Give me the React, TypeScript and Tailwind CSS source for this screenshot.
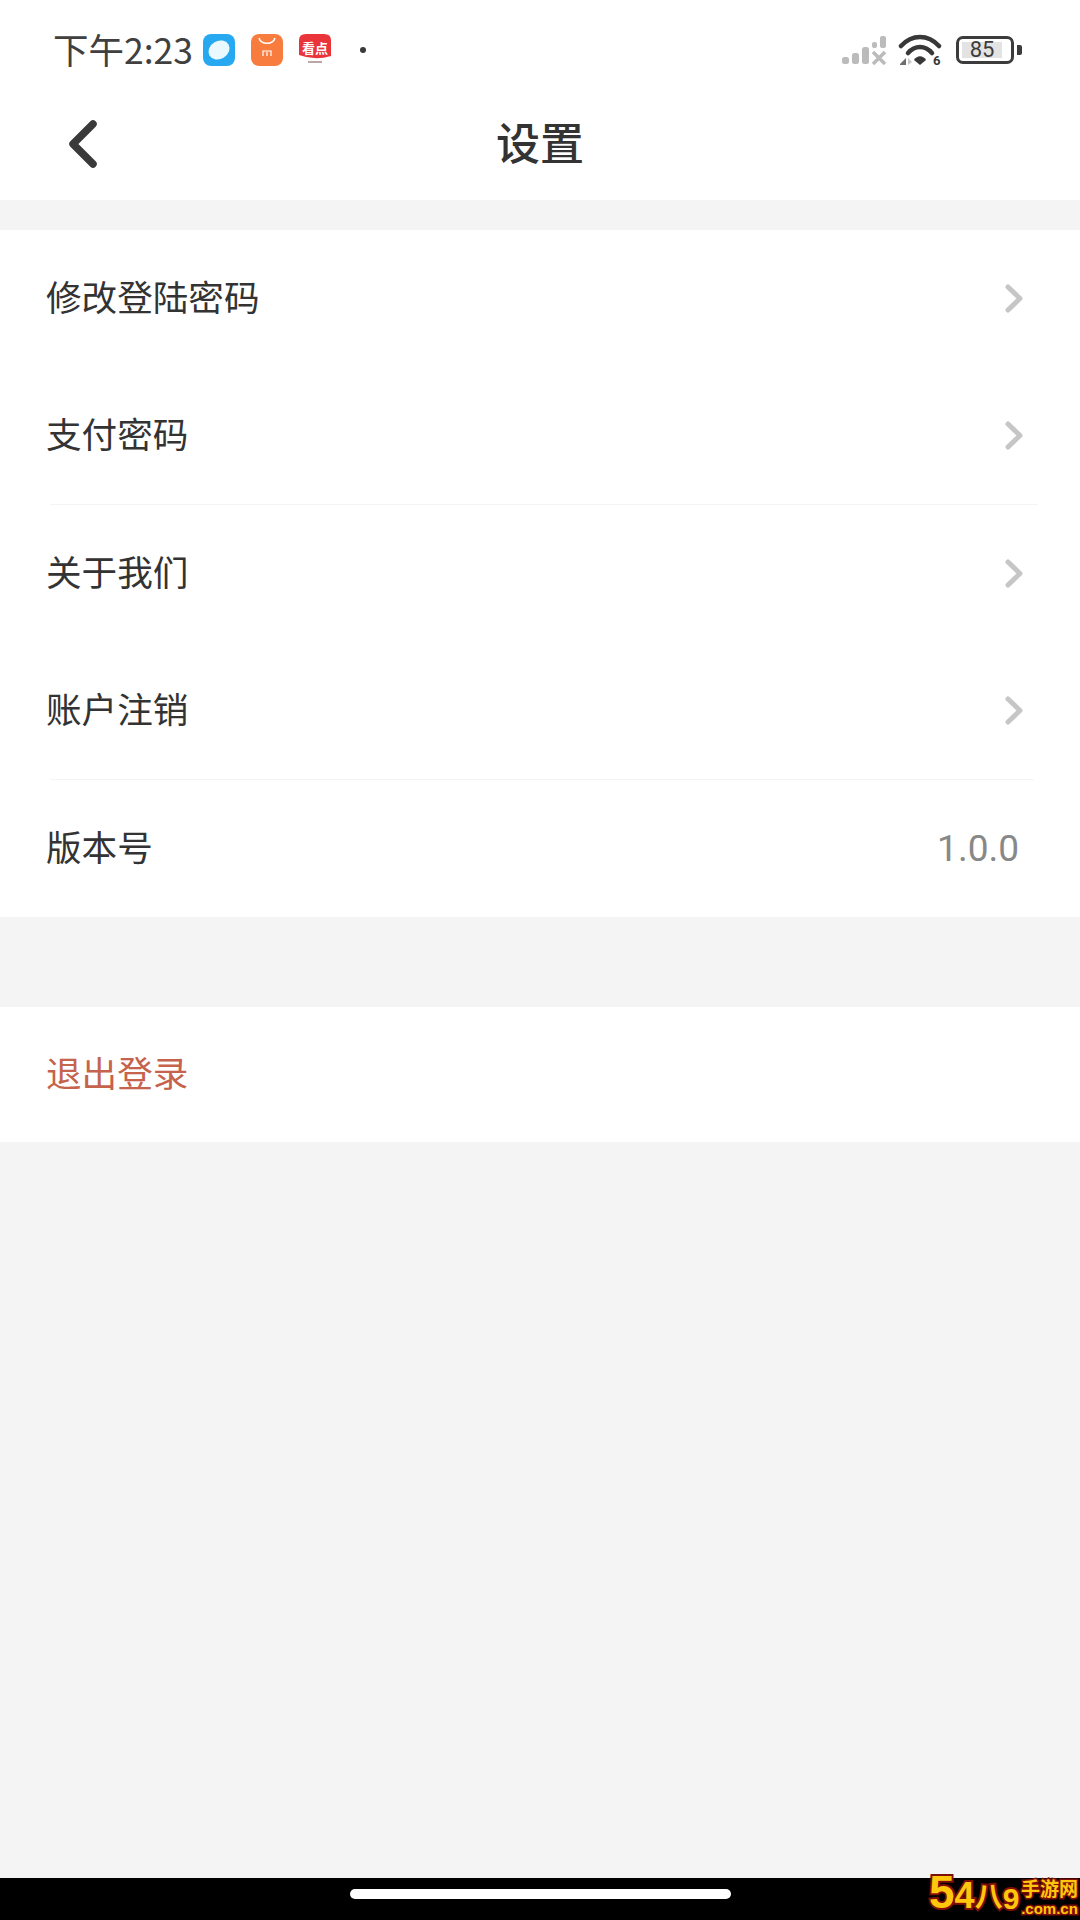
const cjk = "font-['Noto_Sans_CJK_SC','Noto_Sans',sans-serif]";

function Chevron() {
  return (
    <svg width="20" height="32" viewBox="0 0 20 32" fill="none" className="shrink-0">
      <path d="M4 4 L16 15.5 L4 27" stroke="#c6c6c6" strokeWidth="5" strokeLinecap="round" strokeLinejoin="round" />
    </svg>
  );
}

function Row({ label, value, chevron = true }: { label: string; value?: string; chevron?: boolean }) {
  return (
    <div className="flex h-[137px] items-center justify-between pl-[46px] pr-[56px]">
      <span className="pb-[6px] text-[35.6px] text-[#333333]">{label}</span>
      {value && <span className="mr-[5px] font-['Roboto',sans-serif] text-[37px] text-[#888888]">{value}</span>}
      {chevron && <Chevron />}
    </div>
  );
}

function Divider({ right }: { right: number }) {
  return (
    <div className="pl-[50px]" style={{ paddingRight: right }}>
      <div className="h-px bg-[#f4f4f4]" />
    </div>
  );
}

function StatusIcons() {
  return (
    <div className="flex items-center">
      {/* signal */}
      <svg width="46" height="32" viewBox="0 0 46 32" className="mr-[10px]">
        <g fill="#bbbbbb">
          <rect x="0" y="23" width="7" height="7" rx="2.5" />
          <rect x="10" y="19" width="7" height="11" rx="2.5" />
          <rect x="20" y="13" width="7" height="17" rx="2.5" />
          <rect x="30" y="8" width="5" height="6" rx="2" />
          <rect x="38" y="2" width="6" height="12" rx="2" />
        </g>
        <path d="M31 18 L43 30 M43 18 L31 30" stroke="#bbbbbb" strokeWidth="3.5" />
      </svg>
      {/* wifi */}
      <svg width="46" height="34" viewBox="0 0 46 34" className="mr-[12px]">
        <g fill="none" stroke="#383838" strokeWidth="4.5" strokeLinecap="round">
          <path d="M3 13 C14 1 30 1 41 13" />
          <path d="M10 20 C17 12 27 12 34 20" />
        </g>
        <path d="M16 27 C19 22 25 22 28 27 L22 32 Z" fill="#383838" />
        <path d="M2 31 L8 25 V32 H2 Z" fill="#6e6e6e" />
        <path d="M10 25 L14 29 L10 32 Z" fill="#c8c8c8" />
        <text x="35" y="32" fontSize="13" fontWeight="700" fill="#383838" fontFamily="Roboto, sans-serif">6</text>
      </svg>
      {/* battery */}
      <div className="flex h-[28px] w-[58px] items-center rounded-[7px] border-[3px] border-[#3c3c3c] pl-[3px]">
        <div className="flex h-[16px] w-[40px] items-center justify-center bg-[#e3e3e3] font-['Roboto',sans-serif] text-[22px] leading-none text-[#3c3c3c]">
          85
        </div>
      </div>
      <div className="ml-[3px] h-[10px] w-[5px] rounded-r-[2px] bg-[#3c3c3c]" />
    </div>
  );
}

function Watermark() {
  return (
    <div className="absolute bottom-0 right-[1px] flex h-[54px] w-[150px] items-end whitespace-nowrap font-['Liberation_Sans',sans-serif] font-bold text-[#ffc60b] [-webkit-text-stroke:4px_#7d0f08] [paint-order:stroke]">
      <div className="flex w-[91px] items-end pb-[6px] leading-none">
        <span className="text-[46px] leading-[44px] [paint-order:stroke]">5</span>
        <span className="text-[36px] leading-[36px] [paint-order:stroke]">4</span>
        <span className={`${cjk} text-[28px] leading-[38px] [paint-order:stroke]`}>八</span>
        <span className="text-[30px] leading-[30px] [paint-order:stroke]">9</span>
      </div>
      <div className="flex flex-1 flex-col items-center pb-[3px]">
        <span className={`${cjk} text-[19px] leading-[26px] [-webkit-text-stroke:3px_#7d0f08] [paint-order:stroke]`}>手游网</span>
        <span className="text-[15px] leading-[16px] [-webkit-text-stroke:3px_#7d0f08] [paint-order:stroke]">.com.cn</span>
      </div>
    </div>
  );
}

export default function App() {
  return (
    <div className={`relative flex h-[1920px] w-[1080px] flex-col overflow-hidden bg-[#f4f4f4] ${cjk}`}>
      <div className="bg-white">
        {/* status bar */}
        <div className="flex h-[92px] items-center pl-[53px] pr-[58px] pt-[8px]">
          <span className="w-[141px] whitespace-nowrap pb-[2px] text-[35.5px] text-[#404040]">下午2:23</span>
          <div className="ml-[9px] flex items-center gap-[16px]">
            <svg width="32" height="32" viewBox="0 0 32 32">
              <rect width="32" height="32" rx="8" fill="#27a9f1" />
              <ellipse cx="16" cy="16" rx="11" ry="9" transform="rotate(-30 16 16)" fill="#eaf8ff" />
            </svg>
            <svg width="32" height="32" viewBox="0 0 32 32">
              <rect width="32" height="32" rx="8" fill="#f97c3f" />
              <path d="M8 4 C10 11 22 11 24 4" fill="none" stroke="#fff" strokeWidth="1.5" />
              <path d="M12 22 V17 H20 V22 M16 18 V22" fill="none" stroke="#fff" strokeWidth="1.2" />
            </svg>
            <svg width="32" height="32" viewBox="0 0 32 32">
              <path d="M0 6 Q0 0 7 0 H25 Q32 0 32 6 V22 Q16 27 0 21 Z" fill="#e9343a" />
              <text x="16" y="19" textAnchor="middle" fontSize="13" fontWeight="700" fill="#fff" fontFamily="'Noto Sans CJK SC', sans-serif">看点</text>
              <rect x="9" y="27" width="14" height="2" fill="#b9a8a8" />
            </svg>
          </div>
          <div className="ml-[29px] h-[6px] w-[6px] rounded-full bg-[#3a3a3a]" />
          <div className="flex-1" />
          <StatusIcons />
        </div>
        {/* nav */}
        <div className="relative flex h-[108px] items-center justify-center">
          <svg width="36" height="56" viewBox="0 0 36 56" className="absolute left-[65px] top-[26px]">
            <path d="M28 6 L8 26 L28 46" fill="none" stroke="#3a3a3a" strokeWidth="7.5" strokeLinecap="round" strokeLinejoin="round" />
          </svg>
          <span className="pb-[10px] text-[44px] font-medium text-[#333333]">设置</span>
        </div>
      </div>

      <div className="mt-[30px] bg-white">
        <Row label="修改登陆密码" />
        <Row label="支付密码" />
        <Divider right={42} />
        <Row label="关于我们" />
        <Row label="账户注销" />
        <Divider right={46} />
        <Row label="版本号" value="1.0.0" chevron={false} />
      </div>

      <div className="mt-[90px] flex h-[135px] items-center bg-white pl-[46px]">
        <span className="pb-[6px] text-[35.6px] text-[#c5634d]">退出登录</span>
      </div>

      <div className="flex-1" />
      <div className="flex h-[42px] items-start justify-center bg-black pt-[11px]">
        <div className="h-[10px] w-[381px] rounded-full bg-white" />
      </div>
      <Watermark />
    </div>
  );
}
